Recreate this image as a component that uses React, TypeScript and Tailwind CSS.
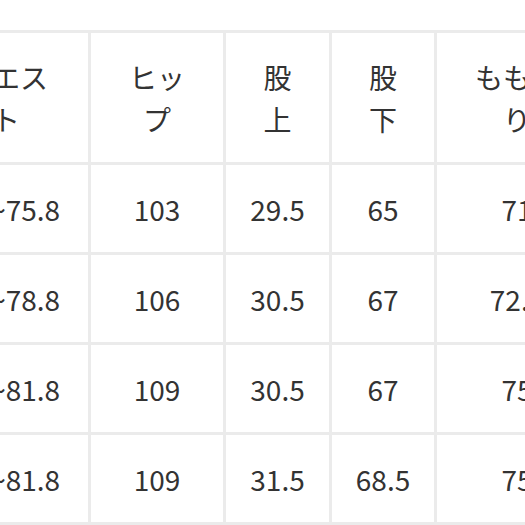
import React from 'react';

type Row = { waist: string; hip: string; rise: string; inseam: string; thigh: string };

const rows: Row[] = [
  { waist: '72.8~75.8', hip: '103', rise: '29.5', inseam: '65', thigh: '71' },
  { waist: '75.8~78.8', hip: '106', rise: '30.5', inseam: '67', thigh: '72.5' },
  { waist: '78.8~81.8', hip: '109', rise: '30.5', inseam: '67', thigh: '75' },
  { waist: '78.8~81.8', hip: '109', rise: '31.5', inseam: '68.5', thigh: '75' },
];

const headers: [string, string][] = [
  ['ウエス', 'ト'],
  ['ヒッ', 'プ'],
  ['股', '上'],
  ['股', '下'],
  ['もも周', 'り'],
];

const Cell = ({ children, className = '' }: { children: React.ReactNode; className?: string }) => (
  <div className={`bg-white flex items-center justify-center text-center ${className}`}>{children}</div>
);

const App = () => {
  return (
    <div
      className="w-[525px] h-[525px] overflow-hidden bg-white text-[#333333] text-[28px] leading-[42px]"
      style={{ fontFamily: '"Noto Sans CJK JP", "Noto Sans", sans-serif' }}
    >
      <div className="mt-[30px] -ml-[79px] w-max grid grid-cols-[164px_132px_103px_102px_160px] grid-rows-[129px_87px_87px_87px_87px] gap-[3px] p-[3px] bg-[#ebebeb]">
        {headers.map(([a, b], i) => (
          <Cell key={i}>
            <span>
              {a}
              <br />
              {b}
            </span>
          </Cell>
        ))}
        {rows.map((r, i) => (
          <React.Fragment key={i}>
            <Cell className="pr-[16px]">{r.waist}</Cell>
            <Cell>{r.hip}</Cell>
            <Cell>{r.rise}</Cell>
            <Cell>{r.inseam}</Cell>
            <Cell>{r.thigh}</Cell>
          </React.Fragment>
        ))}
      </div>
    </div>
  );
};

export default App;
